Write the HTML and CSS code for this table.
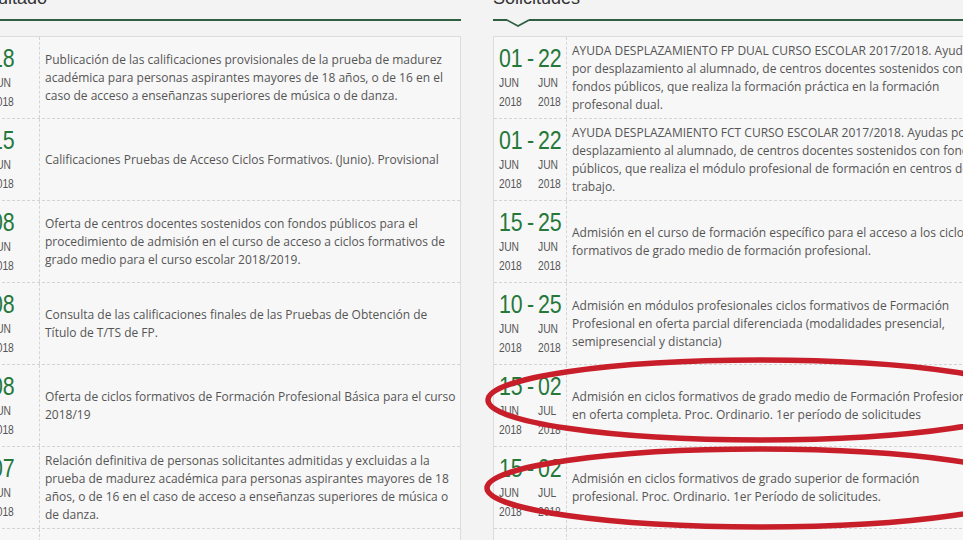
FILE: index.html
```html
<!DOCTYPE html>
<html lang="es">
<head>
<meta charset="utf-8">
<title>Plazos</title>
<link rel="stylesheet" href="styles.css">
</head>
<body>
<div class="page">
  <section class="col">
    <h2 class="col-title">Resultado</h2>
    <div class="list">
      <div class="row">
        <div class="date"><div class="d"><span class="day">18</span><span class="sm">JUN</span><span class="sm">2018</span></div></div>
        <div class="desc">Publicación de las calificaciones provisionales de la prueba de madurez académica para personas aspirantes mayores de 18 años, o de 16 en el caso de acceso a enseñanzas superiores de música o de danza.</div>
      </div>
      <div class="row">
        <div class="date"><div class="d"><span class="day">15</span><span class="sm">JUN</span><span class="sm">2018</span></div></div>
        <div class="desc">Calificaciones Pruebas de Acceso Ciclos Formativos. (Junio). Provisional</div>
      </div>
      <div class="row">
        <div class="date"><div class="d"><span class="day">08</span><span class="sm">JUN</span><span class="sm">2018</span></div></div>
        <div class="desc">Oferta de centros docentes sostenidos con fondos públicos para el procedimiento de admisión en el curso de acceso a ciclos formativos de grado medio para el curso escolar 2018/2019.</div>
      </div>
      <div class="row">
        <div class="date"><div class="d"><span class="day">08</span><span class="sm">JUN</span><span class="sm">2018</span></div></div>
        <div class="desc">Consulta de las calificaciones finales de las Pruebas de Obtención de Título de T/TS de FP.</div>
      </div>
      <div class="row">
        <div class="date"><div class="d"><span class="day">08</span><span class="sm">JUN</span><span class="sm">2018</span></div></div>
        <div class="desc">Oferta de ciclos formativos de Formación Profesional Básica para el curso 2018/19</div>
      </div>
      <div class="row">
        <div class="date"><div class="d"><span class="day">07</span><span class="sm">JUN</span><span class="sm">2018</span></div></div>
        <div class="desc">Relación definitiva de personas solicitantes admitidas y excluidas a la prueba de madurez académica para personas aspirantes mayores de 18 años, o de 16 en el caso de acceso a enseñanzas superiores de música o de danza.</div>
      </div>
      <div class="row">
        <div class="date"><div class="d"><span class="day">07</span><span class="sm">JUN</span><span class="sm">2018</span></div></div>
        <div class="desc">Relación definitiva de personas solicitantes admitidas y excluidas a la prueba de acceso a ciclos formativos de grado superior para personas aspirantes mayores de 19 años, o de 18 con título de técnico.</div>
      </div>
    </div>
  </section>

  <section class="col">
    <h2 class="col-title">Solicitudes
      <svg class="notch" width="22" height="8" viewBox="0 0 22 8"><rect x="0" y="0" width="22" height="2" fill="#f3f3f3"/><polyline points="0,1 11,7 22,1" fill="#f3f3f3" stroke="#2f5e40" stroke-width="1.6"/></svg>
    </h2>
    <div class="list">
      <div class="row">
        <div class="date">
          <div class="d"><span class="day">01</span><span class="sm">JUN</span><span class="sm">2018</span></div>
          <span class="dash">-</span>
          <div class="d"><span class="day">22</span><span class="sm">JUN</span><span class="sm">2018</span></div>
        </div>
        <div class="desc">AYUDA DESPLAZAMIENTO FP DUAL CURSO ESCOLAR 2017/2018. Ayudas por desplazamiento al alumnado, de centros docentes sostenidos con fondos públicos, que realiza la formación práctica en la formación profesonal dual.</div>
      </div>
      <div class="row">
        <div class="date">
          <div class="d"><span class="day">01</span><span class="sm">JUN</span><span class="sm">2018</span></div>
          <span class="dash">-</span>
          <div class="d"><span class="day">22</span><span class="sm">JUN</span><span class="sm">2018</span></div>
        </div>
        <div class="desc">AYUDA DESPLAZAMIENTO FCT CURSO ESCOLAR 2017/2018. Ayudas por desplazamiento al alumnado, de centros docentes sostenidos con fondos públicos, que realiza el módulo profesional de formación en centros de trabajo.</div>
      </div>
      <div class="row">
        <div class="date">
          <div class="d"><span class="day">15</span><span class="sm">JUN</span><span class="sm">2018</span></div>
          <span class="dash">-</span>
          <div class="d"><span class="day">25</span><span class="sm">JUN</span><span class="sm">2018</span></div>
        </div>
        <div class="desc">Admisión en el curso de formación específico para el acceso a los ciclos formativos de grado medio de formación profesional.</div>
      </div>
      <div class="row">
        <div class="date">
          <div class="d"><span class="day">10</span><span class="sm">JUN</span><span class="sm">2018</span></div>
          <span class="dash">-</span>
          <div class="d"><span class="day">25</span><span class="sm">JUN</span><span class="sm">2018</span></div>
        </div>
        <div class="desc">Admisión en módulos profesionales ciclos formativos de Formación Profesional en oferta parcial diferenciada (modalidades presencial, semipresencial y distancia)</div>
      </div>
      <div class="row">
        <div class="date">
          <div class="d"><span class="day">15</span><span class="sm">JUN</span><span class="sm">2018</span></div>
          <span class="dash">-</span>
          <div class="d"><span class="day">02</span><span class="sm">JUL</span><span class="sm">2018</span></div>
        </div>
        <div class="desc">Admisión en ciclos formativos de grado medio de Formación Profesional en oferta completa. Proc. Ordinario. 1er período de solicitudes</div>
      </div>
      <div class="row">
        <div class="date">
          <div class="d"><span class="day">15</span><span class="sm">JUN</span><span class="sm">2018</span></div>
          <span class="dash">-</span>
          <div class="d"><span class="day">02</span><span class="sm">JUL</span><span class="sm">2018</span></div>
        </div>
        <div class="desc">Admisión en ciclos formativos de grado superior de formación profesional. Proc. Ordinario. 1er Período de solicitudes.</div>
      </div>
      <div class="row">
        <div class="date">
          <div class="d"><span class="day">15</span><span class="sm">JUN</span><span class="sm">2018</span></div>
          <span class="dash">-</span>
          <div class="d"><span class="day">02</span><span class="sm">JUL</span><span class="sm">2018</span></div>
        </div>
        <div class="desc">Admisión en ciclos formativos de Formación Profesional Básica. Proc. Ordinario.</div>
      </div>
    </div>
  </section>
</div>

<svg class="marks" width="963" height="540" viewBox="0 0 963 540">
  <ellipse cx="760" cy="400" rx="272" ry="40" fill="none" stroke="#c81e2a" stroke-width="5.5"/>
  <ellipse cx="760" cy="488" rx="273" ry="39" fill="none" stroke="#c81e2a" stroke-width="5.5"/>
</svg>
</body>
</html>
```

FILE: styles.css
```css
html, body {
  margin: 0;
  padding: 0;
  width: 963px;
  height: 540px;
  overflow: hidden;
  background: #f3f3f3;
}

.page {
  display: flex;
  gap: 32px;
  width: 1022px;
  margin: -13px 0 0 -34px;
}

.col {
  width: 495px;
  flex: none;
}

.col-title {
  position: relative;
  margin: 0 0 15px;
  padding: 0 0 10px;
  border-bottom: 2px solid #2f5e40;
  font-family: "Liberation Sans", Arial, sans-serif;
  font-size: 18px;
  line-height: 22px;
  font-weight: normal;
  color: #333;
}

.notch {
  position: absolute;
  left: 14px;
  top: 32px;
  display: block;
}

.list {
  background: #f7f7f7;
  border: 1px solid #dcdcdc;
  border-bottom: none;
}

.row {
  display: flex;
  border-bottom: 1px dashed #d4d4d4;
}

.date {
  width: 73px;
  flex: none;
  box-sizing: border-box;
  border-right: 1px dashed #d4d4d4;
  padding: 6px 0;
  display: flex;
  justify-content: center;
  gap: 4px;
}

.d {
  display: flex;
  flex-direction: column;
  width: 24px;
}

.day, .dash, .sm {
  display: block;
  white-space: nowrap;
  font-family: "Liberation Sans", Arial, sans-serif;
  transform: scaleX(0.82);
  transform-origin: 0 50%;
}

.day, .dash {
  font-size: 26px;
  line-height: 31px;
  color: #25773a;
}

.dash {
  width: 7px;
  flex: none;
}

.sm {
  font-size: 12.5px;
  line-height: 19px;
  color: #555;
}

.desc {
  flex: 1;
  display: flex;
  align-items: center;
  padding: 0 0 0 5px;
  font-family: "Open Sans", sans-serif;
  font-size: 12px;
  line-height: 18px;
  color: #555;
}

.marks {
  position: absolute;
  left: 0;
  top: 0;
  pointer-events: none;
}
```
